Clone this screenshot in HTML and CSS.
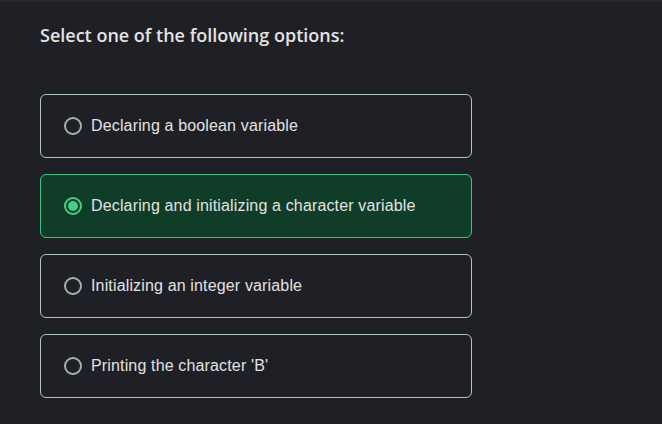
FILE: index.html
```html
<!DOCTYPE html>
<html>
<head>
<meta charset="utf-8">
<link rel="stylesheet" href="styles.css">
</head>
<body>
<div class="topbar"></div>
<main class="quiz">
  <h2 class="prompt">Select one of the following options:</h2>
  <div class="options">
    <label class="option"><span class="radio"></span><span class="text">Declaring a boolean variable</span></label>
    <label class="option selected"><span class="radio"></span><span class="text">Declaring and initializing a character variable</span></label>
    <label class="option"><span class="radio"></span><span class="text">Initializing an integer variable</span></label>
    <label class="option"><span class="radio"></span><span class="text">Printing the character 'B'</span></label>
  </div>
</main>
</body>
</html>
```
FILE: styles.css
```css
html, body {
  margin: 0;
  padding: 0;
  background: #1f2026;
  height: 100%;
}
.topbar {
  height: 2px;
  background: #2a2b31;
}
.quiz {
  padding: 0 40px;
}
.prompt {
  margin: 0;
  padding-top: 21px;
  font-family: "Open Sans", sans-serif;
  font-weight: 600;
  font-size: 18px;
  line-height: 24px;
  color: #e3e3e3;
}
.options {
  margin-top: 47px;
  display: flex;
  flex-direction: column;
  gap: 16px;
  width: 432px;
}
.option {
  box-sizing: border-box;
  height: 64px;
  display: flex;
  align-items: center;
  gap: 9px;
  padding-left: 23px;
  border: 1px solid #b3c2c2;
  border-radius: 6px;
  font-family: "Liberation Sans", Arial, sans-serif;
  font-size: 16px;
  letter-spacing: 0.15px;
  color: #e2e2e2;
}
.radio {
  box-sizing: border-box;
  width: 18px;
  height: 18px;
  border: 2px solid #a9adb0;
  border-radius: 50%;
  display: flex;
  align-items: center;
  justify-content: center;
  flex: none;
}
.option.selected {
  background: #0f3d27;
  border-color: #3fc47f;
}
.option.selected .radio {
  border-color: #49cc86;
}
.option.selected .radio::after {
  content: "";
  width: 10px;
  height: 10px;
  border-radius: 50%;
  background: #49cc86;
}
```
